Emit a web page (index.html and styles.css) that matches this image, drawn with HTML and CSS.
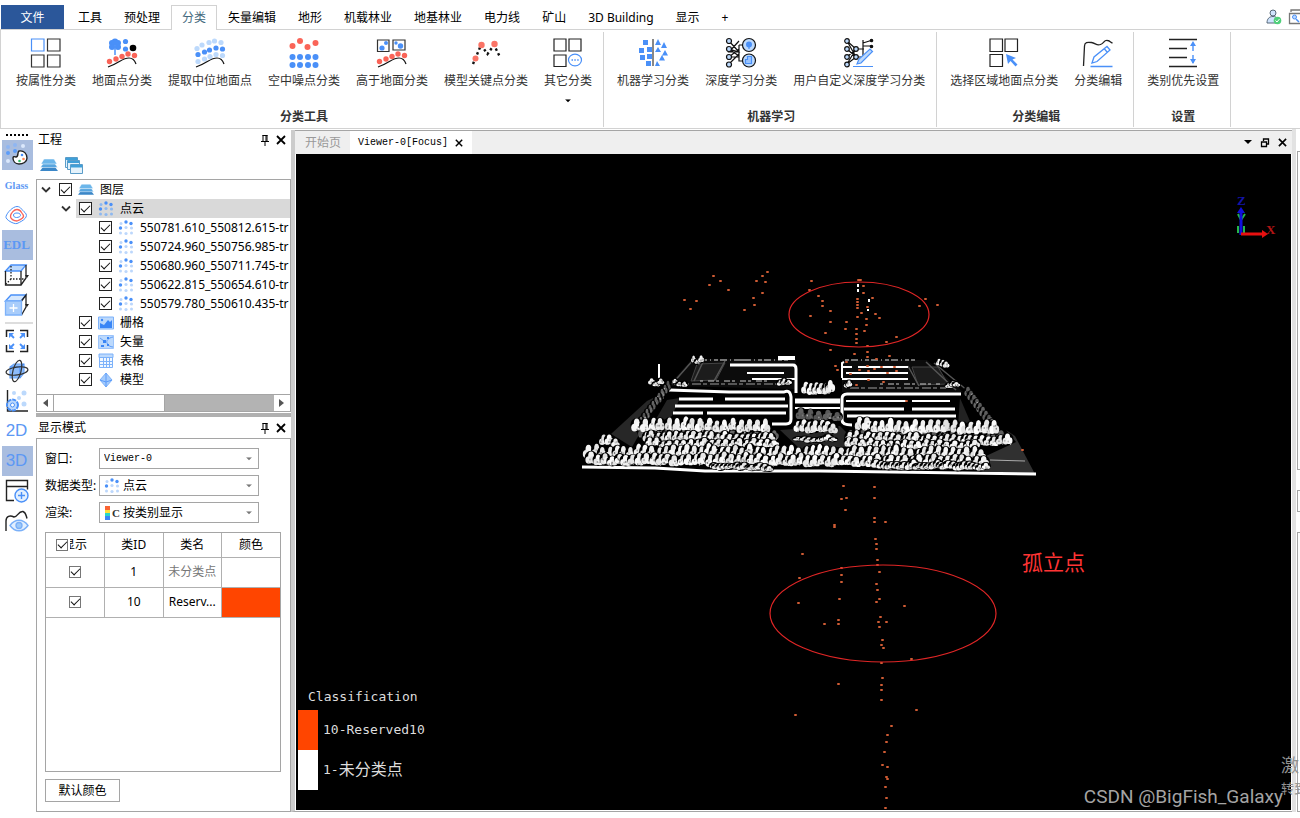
FILE: index.html
```html
<!DOCTYPE html>
<html lang="zh-CN">
<head>
<meta charset="utf-8">
<title>点云分类</title>
<link rel="stylesheet" href="styles.css">
</head>
<body>
<svg class="defs" aria-hidden="true">
  <symbol id="cloud" viewBox="0 0 16 16"><g fill="#4a90f8"><circle cx="8" cy="2" r="1.700"/><circle cx="13" cy="3.500" r="1.700"/><circle cx="2.500" cy="8" r="1.700"/></g><g class="pale"><circle cx="3" cy="3.500" r="1.500"/><circle cx="8" cy="7.500" r="1.600"/><circle cx="13.500" cy="8" r="1.600"/><circle cx="2.500" cy="13" r="1.500"/><circle cx="8" cy="13.500" r="1.600"/><circle cx="13.500" cy="13" r="1.500"/></g></symbol>
  <symbol id="layers" viewBox="0 0 18 14"><path d="M3 9h12l3 4H0z" fill="#3b87c8"/><path d="M3 5.500h12l2.500 4H.5z" fill="#58a6e0" stroke="#fff" stroke-width=".5"/><path d="M4 1h10l3 5H1z" fill="#6cb6ea" stroke="#fff" stroke-width=".5"/></symbol>
  <symbol id="pin" viewBox="0 0 10 12"><path d="M2.500 1.500h5M3 1v6M7 1v6M6 1v6M1 7.500h8M5 8v4" fill="none" stroke="#000"/></symbol>
  <symbol id="close" viewBox="0 0 10 10"><path d="M1 1l8 8M9 1L1 9" stroke="#000" stroke-width="1.800"/></symbol>
  <symbol id="chev" viewBox="0 0 10 8"><path d="M1 1.500l4 4 4-4" fill="none" stroke="#333" stroke-width="1.800"/></symbol>
  <symbol id="down" viewBox="0 0 8 5"><path d="M0 0h8L4 4z"/></symbol>
  <symbol id="ground" viewBox="0 0 32 32"><g fill="#fa6458"><circle cx="3.500" cy="24.500" r="2.700"/><circle cx="10" cy="22" r="2.700"/><circle cx="16" cy="19.500" r="2.700"/><circle cx="22" cy="17" r="2.700"/><circle cx="28.500" cy="18.500" r="2.700"/></g></symbol>
  <symbol id="curve" viewBox="0 0 32 32"><path d="M2 30C14 26 16 21 23 21c4 0 6 3 7 6" fill="none" stroke="#111" stroke-width="1.200"/></symbol>
</svg>

<nav class="tabs">
  <button class="file">文件</button>
  <a href="#">工具</a><a href="#">预处理</a><a href="#" class="on">分类</a><a href="#">矢量编辑</a><a href="#">地形</a><a href="#">机载林业</a><a href="#">地基林业</a><a href="#">电力线</a><a href="#">矿山</a><a href="#">3D Building</a><a href="#">显示</a><a href="#">+</a>
  <div class="account">
    <button aria-label="用户"><svg width="16" height="16"><circle cx="7" cy="4" r="3" fill="#cfe3fd" stroke="#567"/><path d="M1 14c0-4 2-6.500 6-6.500s5 2 5 6.500z" fill="#cfe3fd" stroke="#567"/><circle cx="11.500" cy="11.500" r="3.800" fill="#4fd07a"/><path d="M9.500 11.500l1.500 1.500 2.500-3" fill="none" stroke="#fff"/></svg></button>
    <button aria-label="许可"><svg width="16" height="16"><path d="M3 3V1h13M1.500 4.500h13v10h-13z" fill="#fff" stroke="#777" stroke-width="1.300"/><circle cx="6.500" cy="8" r="2" fill="#bcd7fc" stroke="#4a90f8"/><path d="M8 10l3 3" stroke="#4a90f8" stroke-width="1.500"/></svg></button>
  </div>
</nav>

<section class="ribbon">
  <div class="group">
    <div class="items">
      <button><svg width="32" height="32" fill="none" stroke="#333" stroke-width="1.200"><path d="M1.500 2h12.500v12H1.500z" stroke="#4a90f8"/><path d="M17.500 2H30v12H17.500zM1.500 18h12.500v12H1.500zM17.500 18H30v12H17.500z"/></svg>按属性分类</button>
      <button><svg width="32" height="32"><path d="M9 8v10" stroke="#4a90f8" stroke-width="1.500"/><g fill="#4a90f8"><circle cx="6" cy="6" r="3"/><circle cx="12" cy="6" r="3"/><circle cx="9" cy="5" r="3.500"/><circle cx="6" cy="10" r="3"/><circle cx="12" cy="10" r="3"/><circle cx="19.500" cy="4.500" r="2.600"/><circle cx="19.500" cy="12" r="2.600"/></g><circle cx="27" cy="11" r="3.300"/><use href="#ground"/><use href="#curve"/></svg>地面点分类</button>
      <button><svg width="32" height="32"><g fill="#bcd9fc"><circle cx="3" cy="11.500" r="2.600"/><circle cx="8" cy="8" r="2.600"/><circle cx="15" cy="5.500" r="2.600"/><circle cx="20.500" cy="4" r="2.600"/><circle cx="27" cy="5.500" r="2.600"/><circle cx="4" cy="24.500" r="2.600"/><circle cx="10.500" cy="22" r="2.600"/><circle cx="16" cy="19.500" r="2.600"/><circle cx="22" cy="17.500" r="2.600"/><circle cx="28.500" cy="18.500" r="2.600"/></g><g fill="#4a90f8"><circle cx="4" cy="17.500" r="2.600"/><circle cx="10.500" cy="15" r="2.600"/><circle cx="15.500" cy="13" r="2.600"/><circle cx="22" cy="11" r="2.600"/><circle cx="28.500" cy="12" r="2.600"/></g><use href="#curve"/></svg>提取中位地面点</button>
      <button><svg width="32" height="32"><g fill="#fa6458"><circle cx="4.500" cy="9" r="3"/><circle cx="12" cy="4" r="3"/><circle cx="19.500" cy="10" r="3"/><circle cx="27.500" cy="6" r="3"/></g><g fill="#4a90f8"><circle cx="4.500" cy="20" r="3"/><circle cx="12" cy="20" r="3"/><circle cx="20" cy="20" r="3"/><circle cx="27.500" cy="20" r="3"/><circle cx="4.500" cy="28" r="3"/><circle cx="12" cy="28" r="3"/><circle cx="20" cy="28" r="3"/><circle cx="27.500" cy="28" r="3"/></g></svg>空中噪点分类</button>
      <button><svg width="32" height="32"><path d="M1.500 3H13v11.500H1.500zM17 3h12v10H17z" fill="#fff" stroke="#333" stroke-width="1.200"/><g fill="#4a90f8"><circle cx="6" cy="11" r="2.600"/><circle cx="10" cy="6" r="2"/><circle cx="20" cy="6" r="1.700"/><circle cx="24.500" cy="9" r="2.700"/></g><use href="#ground"/><use href="#curve"/></svg>高于地面分类</button>
      <button><svg width="32" height="32"><path d="M3 27l8-19 6.500 9L24 8l6 12" fill="none" stroke="#111" stroke-width="2.400" stroke-dasharray="2.400 2.800"/><g fill="#fa7466"><circle cx="11.500" cy="8" r="3.200"/><circle cx="24.500" cy="7" r="3.200"/><circle cx="5.500" cy="21.500" r="3"/></g></svg>模型关键点分类</button>
      <button><svg width="32" height="32" fill="none" stroke="#222" stroke-width="1.200"><path d="M2 2h12v12H2zM17 2h12v12H17zM2 18h12v11.500H2z"/><ellipse cx="23" cy="23" rx="6.500" ry="5.800" stroke="#4a90f8"/><path d="M19.500 23h1.500M22.300 23h1.500M25.200 23h1.500" stroke="#4a90f8" stroke-width="1.500"/></svg>其它分类<svg class="more" width="6" height="4" viewBox="0 0 8 5"><use href="#down"/></svg></button>
    </div>
    <h2>分类工具</h2>
  </div>
  <div class="group">
    <div class="items">
      <button><svg width="32" height="32" fill="#4a90f8"><path d="M6 3h5v5H6zM2 11h5v5H2zM10 10h5v5h-5zM3 18h5v5H3zM10 17h5v5h-5zM9 24h5v5H9z"/><path d="M16 2v27" stroke="#111"/><path d="M21 2l3 6h-6zM27 5l3 6h-6zM21 10l3 5h-6zM28 13l3 5.500h-6zM25 18l3 5.500h-6zM20 24l3 5h-5z"/></svg>机器学习分类</button>
      <button><svg width="32" height="32" fill="#bcd9fc" stroke="#111" stroke-width="1.200"><path d="M4 4l10 11H4l10-11M4 12l10 7M4 20l10-8M4 27l10-10M4 20h10M14 8h6M14 8v16h6M14 15L4 12" fill="none"/><circle cx="4" cy="4" r="2.500"/><circle cx="4" cy="12" r="2.500"/><circle cx="4" cy="20" r="2.500"/><circle cx="4" cy="27.500" r="2.500"/><circle cx="24" cy="8" r="6.500"/><circle cx="24" cy="23.500" r="6.500"/><path d="M24 7v5M20.500 26.500v-4h2v-3h4v7z" stroke="#4a90f8" fill="#9cc4fb"/><circle cx="24" cy="7.500" r="3" fill="#4a90f8" stroke="none"/></svg>深度学习分类</button>
      <button><svg width="32" height="32" fill="#bcd9fc" stroke="#111" stroke-width="1.200"><path d="M4 4l9 8-9 8M4 27l9-7-9-8M4 4l9 16M4 27l9-15M13 12h8M13 20h6M20 3v17M20 9h8M20 6l8-2.500" fill="none"/><circle cx="4" cy="4" r="2.300"/><circle cx="4" cy="12" r="2.300"/><circle cx="4" cy="20" r="2.300"/><circle cx="4" cy="27.500" r="2.300"/><circle cx="13" cy="12" r="2.300"/><circle cx="13" cy="20" r="2.300"/><circle cx="28.500" cy="3.500" r="1.200" fill="#111"/><circle cx="28.500" cy="9.500" r="1.200" fill="#111"/><path d="M14 27l2-5L27 12l2.500 2.500L18 26zM10 29.500h20" stroke="#4a90f8"/></svg>用户自定义深度学习分类</button>
    </div>
    <h2>机器学习</h2>
  </div>
  <div class="group">
    <div class="items">
      <button><svg width="32" height="32" fill="none" stroke="#222" stroke-width="1.200"><path d="M2 2h12.500v12.500H2zM17 2h12.500v12.500H17zM2 17.500h12.500V29.500H2z"/><path d="M18 17l10 4-3.500 1.500 5 5-2 2-5-5.500L20 27z" fill="#4a90f8" stroke="none"/></svg>选择区域地面点分类</button>
      <button><svg width="32" height="32" fill="none" stroke="#222" stroke-width="1.300"><path d="M1.500 29l1-20c0-4 3-4 7-3.500s5 3.500 9 2 3-4.500 7-4c2 0 3 2 5 2.500"/><path d="M10 26l2-6L25 9.500l3 3.500-13 11.500zM22.500 12l3 3.500M8.500 29.500h22" stroke="#4a90f8"/></svg>分类编辑</button>
    </div>
    <h2>分类编辑</h2>
  </div>
  <div class="group">
    <div class="items">
      <button><svg width="32" height="32" fill="none" stroke="#222" stroke-width="1.400"><path d="M2 2.500h28M2 11.500h18M2 20.500h18M2 29.500h28"/><path d="M26 6v8M26 18v8" stroke="#4a90f8"/><path d="M23 9l3-5 3 5zM23 22l3 5 3-5z" fill="#4a90f8" stroke="none"/></svg>类别优先设置</button>
    </div>
    <h2>设置</h2>
  </div>
</section>

<main>
  <aside class="rail">
    <i class="grip"></i>
    <button class="on" aria-label="颜色"><svg width="24" height="24"><g fill="#5c9cfa"><circle cx="3" cy="10" r="2"/><circle cx="10" cy="8" r="2"/></g><g fill="#8fb6f2"><circle cx="3" cy="4" r="2"/><circle cx="10" cy="2" r="2"/></g><g fill="#dbe8fc"><circle cx="18" cy="3" r="2"/><circle cx="3" cy="18" r="2"/></g><path d="M14 8c5-1 8 3 8 7s-4 6-8 6-6-3-6-6c0-1 1-2 3-1 3 0 1-5 3-6z" fill="#fff" stroke="#222" stroke-width="1.400"/><circle cx="17" cy="12" r="1.300" fill="#4a90f8"/><circle cx="18.500" cy="16" r="1.300" fill="#f85"/><circle cx="14.500" cy="18" r="1.300" fill="#3b6"/></svg></button>
    <button class="glass">Glass</button>
    <button aria-label="等高线"><svg width="24" height="24" fill="none"><path d="M12 3.500c4 0 5 4 8 6 4 4-1 8-8 11-3 1-12-4-11-7 1-4 7-10 11-10z" stroke="#4a90f8"/><path d="M12 6.500c4 0 4 3 6 5 2 3-2 5-6 6.500-3 0-7-2-6.500-5s3.500-6.500 6.500-6.500z" stroke="#fa6458" stroke-width="1.300"/><path d="M12 10c3 0 3.500 1.500 3.500 2.500s-2 2-4 2-3-1-3-2.500 2-2 3.500-2z" stroke="#4a90f8"/></svg></button>
    <button class="edl on">EDL</button>
    <button aria-label="线框"><svg width="26" height="24" fill="none" stroke="#222" stroke-width="1.300"><path d="M1.500 8L7 2h15l-5 6z" fill="#bcd9fc" stroke="#4a90f8"/><path d="M1.500 8v14H17V8M17 22l5-7V2"/><path d="M7 3v13h14M7 16l-5 5" stroke-dasharray="1.500 1.500"/><path d="M21 12h4l-2 3z" fill="#222" stroke="none"/></svg></button>
    <button aria-label="实体"><svg width="26" height="24" fill="none" stroke="#222" stroke-width="1.300"><path d="M1.500 8L7 2h15l-5 6z" fill="#d6e8fe" stroke="#4a90f8"/><path d="M17.500 8L22 2v12l-4.500 8"/><path d="M1.500 8h16v14h-16z" fill="#a9cdfb" stroke="#7db2fa"/><path d="M9.500 11v8M5.500 15h8" stroke="#fff"/><path d="M21 11h4l-2 3z" fill="#222" stroke="none"/></svg></button>
    <hr>
    <button aria-label="全图"><svg width="24" height="24" fill="none" stroke="#222" stroke-width="1.500"><path d="M1.500 8V1.500H9M15 1.500h7.500V8M1.500 16v6.500H9M15 22.500h7.500V16"/><g stroke="#4a90f8" stroke-width="1.800"><path d="M9 9L5 5M15 9l4-4M9 15l-4 4M15 15l4 4"/></g><path d="M4 4h5L4 9zM20 4h-5l5 5zM4 20h5l-5-5zM20 20h-5l5-5z" fill="#4a90f8" stroke="none"/></svg></button>
    <button aria-label="旋转"><svg width="24" height="24" fill="none" stroke="#333" stroke-width="1.200"><path d="M5 8l4-3h10v9l-4 5H5z" fill="#8dbcfb" stroke="#6aa6fa"/><path d="M5 8h10v11M15 8l4-3" stroke="#4a90f8"/><ellipse cx="12" cy="12" rx="11" ry="4" transform="rotate(-8 12 12)"/><ellipse cx="12" cy="12" rx="4" ry="11" transform="rotate(15 12 12)"/></svg></button>
    <button aria-label="点设置"><svg width="24" height="24" fill="none"><path d="M2.500 1v21H23" stroke="#222" stroke-width="1.400"/><g fill="#bcd9fc"><circle cx="9" cy="4" r="2"/><circle cx="19" cy="4" r="2.500"/><circle cx="14" cy="9" r="2"/><circle cx="19" cy="15" r="2.500"/></g><circle cx="7.500" cy="16" r="5.500" fill="#bcd9fc" stroke="#4a90f8" stroke-width="2" stroke-dasharray="4 1"/><circle cx="7.500" cy="16" r="2" fill="#fff" stroke="#4a90f8"/></svg></button>
    <button class="dim">2D</button>
    <button class="dim on">3D</button>
    <button aria-label="新建窗口"><svg width="24" height="24" fill="none" stroke="#222" stroke-width="1.400"><path d="M9 21.500H1.500v-20h21v9M1.500 7.500h21"/><circle cx="16.500" cy="16.500" r="6.500" fill="#e2effe" stroke="#4a90f8"/><path d="M16.500 13v7M13 16.500h7" stroke="#4a90f8"/></svg></button>
    <button aria-label="预览"><svg width="24" height="24" fill="none" stroke="#222" stroke-width="1.400"><path d="M1 22V12c0-5 4-6 8-4 4 0 4-6 9-5.500 3 1 3 4 4 7"/><path d="M5 16.500c5-7 13-7 18 0-5 7-13 7-18 0z" fill="#e2effe" stroke="#7ab0f8"/><circle cx="14" cy="16.500" r="3" fill="#9cc8f8" stroke="#7ab0f8"/></svg></button>
  </aside>

  <div class="dock">
    <header class="title">工程<span><button aria-label="固定"><svg width="10" height="12"><use href="#pin"/></svg></button><button aria-label="关闭"><svg width="10" height="10"><use href="#close"/></svg></button></span></header>
    <div class="tools">
      <button aria-label="图层"><svg width="18" height="14"><use href="#layers"/></svg></button>
      <button aria-label="窗口"><svg width="18" height="17"><g fill="#e4f2fb" stroke="#5a9cc8"><path d="M.5.500h12v10H.5z"/><path d="M2.500 3.500h12v9h-12z"/><path d="M5.500 7.500h12v9h-12z"/></g><path d="M1 1h11v2H1zM3 4h11v2H3zM6 8h11v2.500H6z" fill="#3f9fd8"/></svg></button>
    </div>
    <div class="tree">
      <ul>
        <li class="l0"><svg width="10" height="8"><use href="#chev"/></svg><label><input type="checkbox" checked><svg width="16" height="13"><use href="#layers"/></svg>图层</label></li>
        <li class="l1"><svg width="10" height="8"><use href="#chev"/></svg><label class="sel"><input type="checkbox" checked><svg width="16" height="16"><use href="#cloud"/></svg>点云</label></li>
        <li class="l2"><label><input type="checkbox" checked><svg width="16" height="16"><use href="#cloud"/></svg>550781.610_550812.615-tr</label></li>
        <li class="l2"><label><input type="checkbox" checked><svg width="16" height="16"><use href="#cloud"/></svg>550724.960_550756.985-tr</label></li>
        <li class="l2"><label><input type="checkbox" checked><svg width="16" height="16"><use href="#cloud"/></svg>550680.960_550711.745-tr</label></li>
        <li class="l2"><label><input type="checkbox" checked><svg width="16" height="16"><use href="#cloud"/></svg>550622.815_550654.610-tr</label></li>
        <li class="l2"><label><input type="checkbox" checked><svg width="16" height="16"><use href="#cloud"/></svg>550579.780_550610.435-tr</label></li>
        <li class="l3"><label><input type="checkbox" checked><svg width="16" height="16"><path d="M.5 2h15v12H.5z" fill="#bcd9fc" stroke="#7db2fa"/><path d="M2 13V8l4 2 4-5 2 2 2-2v8z" fill="#3a86f6"/><circle cx="4" cy="5" r="1.200" fill="#3a86f6"/></svg>栅格</label></li>
        <li class="l3"><label><input type="checkbox" checked><svg width="16" height="16"><path d="M.5 1.500h15v13H.5z" fill="#bcd9fc" stroke="#9cc4fb"/><path d="M15 3c-5 1-7 4-6 6s3 4 6 4M2 4l4 3" fill="none" stroke="#5c9cfa"/><path d="M5 6h3v3H5zM3 11h3v2H3zM9 10h2v2H9zM9 3h2v2H9z" fill="#3a86f6"/></svg>矢量</label></li>
        <li class="l3"><label><input type="checkbox" checked><svg width="16" height="16"><path d="M1.500 1.500h13v13h-13zM1.500 8.500h13M1.500 11.500h13M5.500 4v10M8.500 4v10M11.500 4v10" fill="#f2f8ff" stroke="#7db2fa"/><path d="M1 1h14v3.500H1z" fill="#bcd9fc" stroke="#7db2fa"/></svg>表格</label></li>
        <li class="l3"><label><input type="checkbox" checked><svg width="16" height="16"><path d="M8 1l6 7-6 7-6-7z" fill="#a4cbfc" stroke="#7db2fa"/><path d="M8 1v14M2 8l6 2 6-2" fill="none" stroke="#5c9cfa"/></svg>模型</label></li>
      </ul>
      <div class="scroll"><button aria-label="向左"><svg width="6" height="8"><path d="M6 0v8L1 4z" fill="#555"/></svg></button><i></i><button aria-label="向右"><svg width="6" height="8"><path d="M0 0v8l5-4z" fill="#555"/></svg></button></div>
    </div>
    <header class="title second">显示模式<span><button aria-label="固定"><svg width="10" height="12"><use href="#pin"/></svg></button><button aria-label="关闭"><svg width="10" height="10"><use href="#close"/></svg></button></span></header>
    <div class="mode">
      <div class="fields">
        <label for="win">窗口:</label>
        <div class="combo mono"><select id="win"><option>Viewer-0</option></select><svg width="6" height="4" viewBox="0 0 8 5"><use href="#down"/></svg></div>
        <label for="kind">数据类型:</label>
        <div class="combo"><svg width="16" height="16"><use href="#cloud"/></svg><select id="kind"><option>点云</option></select><svg width="6" height="4" viewBox="0 0 8 5"><use href="#down"/></svg></div>
        <label for="paint">渲染:</label>
        <div class="combo"><svg width="16" height="16"><path d="M1 1h5v4H1z" fill="#fa6432"/><path d="M1 5h5v3H1z" fill="#ffe03c"/><path d="M1 8h5v3H1z" fill="#28d8c8"/><path d="M1 11h5v4H1z" fill="#3a86f6"/><text x="8" y="12" class="cmark">C</text></svg><select id="paint"><option>按类别显示</option></select><svg width="6" height="4" viewBox="0 0 8 5"><use href="#down"/></svg></div>
      </div>
      <div class="grid">
        <table>
          <thead><tr><th class="all">显示<input type="checkbox" checked aria-label="全部显示"></th><th>类ID</th><th>类名</th><th>颜色</th></tr></thead>
          <tbody>
            <tr><td><input type="checkbox" checked aria-label="显示 1"></td><td>1</td><td class="muted">未分类点</td><td></td></tr>
            <tr><td><input type="checkbox" checked aria-label="显示 10"></td><td>10</td><td>Reserv...</td><td class="orange"></td></tr>
          </tbody>
        </table>
      </div>
      <button class="reset">默认颜色</button>
    </div>
  </div>

  <div class="viewer">
    <header>
      <button class="start">开始页</button>
      <div class="active">Viewer-0[Focus]<button aria-label="关闭"><svg width="8" height="8" viewBox="0 0 10 10"><use href="#close"/></svg></button></div>
      <div class="ctl">
        <button aria-label="列表"><svg width="8" height="5"><use href="#down"/></svg></button>
        <button aria-label="还原"><svg width="10" height="10" fill="none" stroke="#000"><path d="M3.500 3V1h5v5H6.500M1.500 4h5v4.500h-5z" stroke-width="1.300"/></svg></button>
        <button aria-label="关闭"><svg width="9" height="9" viewBox="0 0 10 10"><use href="#close"/></svg></button>
      </div>
    </header>
    <div class="stage">
      <svg class="scene" viewBox="296 154 995 656" preserveAspectRatio="xMidYMid slice" role="img" aria-label="点云">
        <g fill="#272727">
          <path d="M611 434l36-33 16-8-31 54z"/>
          <path d="M1006 430l10 12-30 14-4 15 53 3-20-38z" fill="#303030"/>
          <path d="M668 386l24-27h104v30z" fill="#0c0c0c"/>
          <path d="M842 360h85l36 32H842z" fill="#0c0c0c"/>
          <path d="M697 364l28-1-9 17-25 1zM912 367h26l10 17-30 1z" fill="#1c1c1c" stroke="#444"/>
          <path d="M780 430l60-4 20 20-60 3z"/>
          <path d="M680 398l-8 18-20 10 15-26zM960 398l12 28h-14z" fill="#222"/>
        </g>
        <g fill="none" stroke="#555" stroke-width="2">
          <path d="M672 384l22-25M694 381l9-19M714 381l11-20M926 362l30 28M934 363l34 28M908 366l11 20" stroke-width="1.500"/>
          <path d="M674 384h116M850 388h96" stroke="#555" stroke-dasharray="9 2 4 3"/>
          <path d="M700 381h70M880 384h60" stroke="#ccc" stroke-width="1" stroke-dasharray="3 5 6 2"/>
          <path d="M694 360h60M738 360h50M845 360h70" stroke="#999" stroke-width="1.500" stroke-dasharray="4 2 7 3 1 3"/>
          <path d="M990 460l35 1" stroke="#aaa" stroke-width="1"/>
        </g>
        <g fill="none" stroke="#fff" stroke-width="3">
          <path d="M659 364v18" stroke-width="2"/>
          <path d="M778 358h17" stroke-width="4"/>
          <path d="M730 365h63q3 0 3 4v24"/>
          <path d="M747 373h37M752 379h43" stroke-width="2"/>
          <path d="M669 390l60 2h55q6-3 7 5v22q0 5-5 5h-14"/>
          <path d="M679 399h34M725 399h60M675 406h113M673 413h30M707 413h79"/>
          <path d="M795 401h45" stroke-width="5"/>
          <path d="M795 408h45" stroke-width="2"/>
          <path d="M842 378v-15l2-1M842 367h10M858 367h50M846 373h62M842 379h66" stroke-width="2"/>
          <path d="M852 425q-10 0-10-5v-21q0-5 5-5h114"/>
          <path d="M846 401h60M912 401h38" stroke-width="2"/><path d="M844 409h60M912 409h43M847 416h109"/>
          <path d="M582 467l73 1 50 3h115l216 3"/>
        </g>
        <g id="trees"></g>
        <path class="noise" d="M684 300h1M696 301h1M690 309h1M713 276h1M709 285h1M720 281h1M728 290h1M744 310h1M754 305h1M753 298h1M762 293h1M756 281h1M765 282h1M762 276h1M767 272h1M811 281h1M809 290h1M818 296h1M822 301h1M822 306h1M830 311h1M810 316h1M830 322h1M825 333h1M845 329h1M846 322h1M858 280h3M863 286h1M863 293h1M872 298h1M867 307h1M857 299h1M857 302h1M857 305h1M857 308h1M861 313h1M857 317h1M875 314h1M879 318h1M866 319h1M866 325h1M864 331h1M856 329h1M856 334h1M856 339h1M856 343h1M867 346h1M867 352h1M867 357h1M886 342h1M896 337h1M919 306h1M925 299h1M937 305h1M830 350h1M854 354h1M876 359h1M889 356h1M846 362h1M835 366h1M837 370h1M850 374h1M859 370h1M867 366h1M868 371h1M874 369h1M881 367h1M894 367h1M896 371h1M887 373h1M868 380h1M883 382h1M856 385h1M906 401h1M1022 450h1M843 486h1M841 499h1M846 498h1M845 510h1M834 525h1M834 527h1M874 487h1M874 498h1M874 518h1M874 522h1M885 522h1M875 539h1M876 544h1M876 549h1M877 560h1M877 565h1M879 572h1M802 554h1M799 578h1M798 603h1M841 568h1M841 575h1M841 582h1M839 599h1M838 620h1M838 624h1M824 624h1M876 584h1M877 590h1M879 599h1M876 602h1M880 617h1M886 622h1M878 622h1M879 627h1M882 640h1M881 645h1M883 648h1M904 606h1M911 659h1M881 663h1M882 678h1M881 685h1M881 690h1M881 700h1M838 684h1M795 715h1M916 710h1M891 726h1M887 735h1M886 742h1M884 752h1M882 765h1M887 767h1M886 777h1M887 779h1M885 787h1M886 798h1M885 808h1"/>
        <path d="M858 284v10M869 299v4M868 309v2" stroke="#fff" stroke-width="2" stroke-dasharray="3 2"/>
        <g fill="none" stroke="#e02626" stroke-width="1.200"><ellipse cx="859" cy="314.500" rx="70" ry="32.500"/><ellipse cx="883" cy="613.500" rx="113" ry="48.500"/></g>
        <text class="note" x="1022" y="570">孤立点</text>
        <g class="axes"><path d="M1238 226v7M1244 226v7M1238 214l3 6 4-6" fill="none" stroke="#25b84a" stroke-width="2"/><path d="M1241 235v-23" stroke="#1010dd" stroke-width="3"/><path d="M1237 213l4-6 4 6z" fill="#1010dd"/><path d="M1241 234h22" stroke="#e81010" stroke-width="3"/><path d="M1262 230l6 4-6 4z" fill="#e81010"/><text x="1237" y="205" fill="#1414a8">Z</text><text x="1266" y="234" fill="#b01414">X</text></g>
      </svg>
      <div class="legend">
        <h3>Classification</h3>
        <p><i class="orange"></i>10-Reserved10</p>
        <p><i></i>1-<b>未分类点</b></p>
      </div>
      <div class="mark">CSDN @BigFish_Galaxy</div>
    </div>
  </div>
  <div class="edge"><i></i><i></i><i></i></div>
  <div class="activate"><span>激</span><small>转到</small></div>
</main>
<script src="trees.js"></script>
</body>
</html>
```
FILE: trees.js
```js
let seed = 11;
function rnd() {
  seed = (seed * 16807) % 2147483647;
  return seed / 2147483647;
}

const group = document.getElementById('trees');
let out = '';

function blob(x, y, rx, ry, c) {
  out += `<ellipse cx="${x.toFixed(1)}" cy="${y.toFixed(1)}" rx="${rx.toFixed(1)}" ry="${ry.toFixed(1)}" fill="rgb(${c},${c},${c})"/>`;
}

/* One crown: a dark halo, a narrow top, two wide lobes, then shaded specks. */
function tree(x, y, w, h, dark) {
  const base = dark ? 80 : 225;
  const tone = () => base + Math.floor(rnd() * 30);
  blob(x, y - h / 2, w / 2 + 1, h / 2 + 1, 0);
  blob(x, y - h * 0.65, w * 0.27, h * 0.38, tone());
  blob(x - w * 0.2, y - h * 0.3, w * 0.32, h * 0.32, tone());
  blob(x + w * 0.2, y - h * (0.25 + rnd() * 0.2), w * 0.32, h * 0.32, tone());
  for (let i = 0; i < 3; i++) {
    const g = dark ? 20 + Math.floor(rnd() * 180) : 110 + Math.floor(rnd() * 90);
    blob(x + (rnd() - 0.5) * w * 0.7, y - rnd() * h * 0.6, 0.7, 1, g);
  }
}

function row(x0, y0, x1, y1, step, w, h, dark) {
  for (let x = x0; x <= x1; x += step) {
    const y = y0 + (y1 - y0) * (x - x0) / (x1 - x0);
    tree(x + rnd() * 2, y + rnd() * 3, w + rnd() * 2, h + rnd() * 3, dark);
  }
}

for (let i = 0; i < 10; i++) {
  tree(668 - i * 3, 390 + i * 4, 5, 9, true);
  tree(968 + i * 3, 396 + i * 4, 7, 9, true);
}
row(692, 362, 702, 362, 4, 5, 4);
row(650, 384, 662, 384, 5, 6, 4);
row(675, 383, 685, 384, 4, 5, 4);
row(938, 364, 946, 365, 4, 5, 4);
row(948, 385, 958, 386, 4, 6, 4);
row(780, 384, 790, 384, 4, 5, 4);
row(845, 385, 852, 385, 4, 5, 4);
row(805, 392, 832, 393, 5, 8, 10);
row(800, 418, 836, 420, 9, 9, 8, true);
row(797, 430, 838, 431, 6, 9, 9);
row(642, 436, 776, 439, 6, 8, 9, true);
row(850, 438, 1000, 440, 6, 8, 9, true);
row(636, 429, 770, 430, 8, 9, 11);
row(858, 430, 998, 433, 8, 9, 11);
row(645, 439, 776, 441, 6, 8, 8);
row(850, 441, 1006, 443, 6, 8, 8);
row(648, 445, 776, 446, 7, 8, 6);
row(848, 446, 978, 448, 7, 8, 6);
row(602, 443, 618, 446, 6, 8, 8);
row(798, 440, 836, 440, 5, 8, 3);
row(588, 457, 980, 459, 7, 9, 12);
row(590, 463, 984, 465, 7, 9, 9);
row(712, 467, 768, 468, 4, 8, 4);
row(876, 467, 984, 468, 4, 8, 5);
group.innerHTML = out;
```
FILE: styles.css
```css
* { box-sizing: border-box; }
body {
  margin: 0;
  min-height: 100vh;
  display: flex;
  flex-direction: column;
  overflow: hidden;
  background: #fff;
  color: #000;
  font: 12px/18px "Noto Sans", "Noto Sans CJK SC", sans-serif;
}
button {
  border: 0;
  padding: 0;
  background: none;
  color: inherit;
  font: inherit;
  display: flex;
  align-items: center;
  justify-content: center;
}
svg { display: block; flex: none; }
.defs { position: absolute; width: 0; height: 0; }
.pale { fill: var(--pale, #bcd7fc); }
ul { list-style: none; margin: 0; padding: 0; }

.tabs {
  display: flex;
  height: 30px;
  padding: 5px 0 0 1px;
  border-bottom: 1px solid #d2d2d2;
}
.tabs a {
  padding: 4px 11px 3px;
  height: 25px;
  color: #000;
  text-decoration: none;
  white-space: nowrap;
}
.tabs .file { width: 63px; height: 24px; padding-top: 2px; margin-right: 3px; background: #2b579a; color: #fff; }
.tabs .on {
  padding: 3px 10px;
  border: 1px solid #d2d2d2;
  border-bottom: 0;
  background: #fff;
  color: #44697d;
}
.account { display: flex; gap: 6px; margin-left: auto; margin-right: -4px; align-items: center; }

.ribbon {
  display: flex;
  height: 99px;
  padding: 2px 0 1px;
  border-left: 1px solid #d2d2d2;
  border-bottom: 1px solid #d2d2d2;
  color: #333;
}
.group {
  display: flex;
  flex-direction: column;
  justify-content: space-between;
  padding: 5px 3px 0 5px;
  border-right: 1px solid #d2d2d2;
}
.group:first-child { padding-left: 7px; }
.items { display: flex; }
.items button {
  flex-direction: column;
  justify-content: flex-start;
  padding: 0 8px;
  line-height: 24px;
  white-space: nowrap;
}
.items .more { margin-top: 6px; }
.group h2 { margin: 0; font-size: 12px; line-height: 20px; text-align: center; }

main { flex: 1; display: flex; padding-bottom: 6px; position: relative; }
.rail { width: 36px; padding-left: 2px; }
.rail button { width: 31px; height: 30px; padding-right: 2px; color: #5c98f4; }
.rail .on { background: #a9bddf; }
.rail hr { height: 2px; margin: 2px 3px; border: 0; background: #ddd; }
.grip { display: block; height: 2px; margin: 5px 6px 4px 4px; background: repeating-linear-gradient(90deg, #000 0 2px, #fff 2px 4px); }
.rail .glass { font: bold 10px "Liberation Serif", serif; }
.rail .edl { font: bold 13px "Liberation Serif", serif; }
.rail .dim { font: 17px "Liberation Sans", sans-serif; }

.dock {
  width: 255px;
  display: flex;
  flex-direction: column;
}
.title {
  display: flex;
  justify-content: space-between;
  padding: 0 5px 0 2px;
  line-height: 22px;
}
.title span { display: flex; gap: 6px; }
.title.second { border-top: 4px solid #b0b0b0; line-height: 21px; }
.tools { display: flex; gap: 7px; height: 28px; padding-left: 4px; }
.tree { border: 1px solid #a5a5a5; overflow: hidden; margin-bottom: 1px; }
.tree ul { padding-bottom: 5px; }
.tree li { display: flex; align-items: center; height: 19px; gap: 5px; }
.tree label { display: flex; flex: 1; align-items: center; height: 19px; gap: 6px; padding-left: 3px; white-space: nowrap; }
.l0 { padding-left: 4px; }
.l1 { padding-left: 24px; }
.l2 { padding-left: 59px; }
.l3 { padding-left: 39px; }
.sel { --pale: #8db8f0; background: #d9d9d9; }
input[type=checkbox] {
  appearance: none;
  width: 13px;
  height: 13px;
  margin: 0;
  flex: none;
  display: grid;
  place-items: center;
  border: 1px solid #222;
  background: #fff;
}
input[type=checkbox]:checked::before {
  content: "";
  width: 8px;
  height: 4px;
  margin-bottom: 3px;
  border-left: 1px solid #111;
  border-bottom: 1px solid #111;
  transform: rotate(-45deg);
}
.scroll { display: flex; height: 17px; background: #b3b3b3; border-top: 1px solid #a5a5a5; }
.scroll button { width: 16px; background: #fff; }
.scroll i { width: 112px; background: #fff; border: 0 solid #a5a5a5; border-width: 0 1px; margin-right: auto; }

.mode {
  flex: 1;
  display: flex;
  flex-direction: column;
  padding: 9px 9px 9px 8px;
  border: 1px solid #a5a5a5;
}
.fields { display: grid; grid-template-columns: 54px 160px; row-gap: 6px; margin-bottom: 9px; }
.fields label { line-height: 21px; white-space: nowrap; }
.combo { display: flex; align-items: center; height: 21px; border: 1px solid #a5a5a5; padding: 0 6px 0 4px; fill: #777; }
.combo select {
  appearance: none;
  flex: 1;
  border: 0;
  padding: 0 0 0 3px;
  background: none;
  color: #000;
  font: inherit;
}
.combo.mono { font: 10px "Liberation Mono", monospace; }
.combo.mono select { padding: 0; }
.cmark { font: bold 11px "Liberation Serif", serif; fill: #333; }
.grid { flex: 1; border: 1px solid #a5a5a5; }
table { width: 100%; border-collapse: collapse; table-layout: fixed; }
th, td { height: 30px; padding: 0; border: 1px solid #b0b0b0; text-align: center; font-weight: normal; }
th { height: 24px; }
tr > :first-child { border-left: 0; }
tr > :last-child { border-right: 0; }
thead th { border-top: 0; }
td input[type=checkbox] { margin: 0 auto; width: 12px; height: 12px; border-color: #777; }
.all { position: relative; }
th.all input[type=checkbox] { position: absolute; left: 10px; top: 6px; width: 12px; height: 12px; border-color: #777; box-shadow: 2px 0 #fff; }
.muted { color: #777; }
.orange { background: #ff4500; }
.reset { width: 75px; height: 23px; margin-top: 7px; border: 1px solid #a5a5a5; }

.viewer {
  flex: 1;
  min-width: 0;
  display: flex;
  flex-direction: column;
  margin-top: 1px;
  border-left: 4px solid #ccc;
  border-bottom: 1px solid #a5a5a5;
}
.viewer header {
  display: flex;
  height: 24px;
  border-top: 1px solid #a5a5a5;
  background: #efefef;
}
.start { padding: 0 9px 0 10px; color: #999; }
.active { display: flex; align-items: center; gap: 7px; padding: 0 9px 0 8px; background: #fff; font: 10px "Liberation Mono", monospace; }
.ctl { display: flex; gap: 8px; margin-left: auto; padding-right: 5px; }
.stage { position: relative; flex: 1; margin: 0 1px 1px; background: #000; overflow: hidden; }
.scene { position: absolute; inset: 0; width: 100%; height: 100%; }
.noise { fill: none; stroke: #d05c34; stroke-width: 2; stroke-linecap: round; }
.note { font: 21px "Noto Sans CJK SC", sans-serif; fill: #ff3434; }
.axes text { font: bold 13px "Liberation Serif", serif; }
.legend {
  position: absolute;
  left: 2px;
  bottom: 20px;
  color: #ddd;
  font: 13px/40px "DejaVu Sans Mono", "Noto Sans CJK SC", monospace;
}
.legend h3 { margin: 0 0 0 10px; font: inherit; line-height: 27px; }
.legend p { display: flex; margin: 0; }
.legend i { width: 20px; height: 40px; margin-right: 5px; background: #fff; }
.legend i.orange { background: #ff4500; }
.legend b { font-weight: normal; font-size: 16px; }
.mark { position: absolute; right: 8px; bottom: 0; color: #a4a4a4; font: 19px/26px Roboto, sans-serif; }

.edge {
  width: 8px;
  display: flex;
  flex-direction: column;
  gap: 20px;
  padding: 22px 0 0 1px;
  border-left: 4px solid #e2e2e2;
}
.edge i { flex: 16; border: 1px solid #a5a5a5; border-right: 0; }
.edge i:nth-child(2) { flex: 1; }
.edge i:nth-child(3) { flex: 14; }
.activate {
  position: absolute;
  right: 0;
  bottom: 20px;
  width: 19px;
  overflow: hidden;
  white-space: nowrap;
  color: #909090;
  display: flex;
  flex-direction: column;
  font-size: 18px;
  line-height: 25px;
}
.activate small { font-size: 13px; line-height: 20px; }
```
